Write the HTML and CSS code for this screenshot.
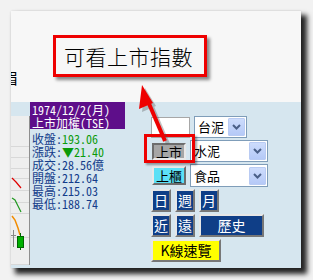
FILE: index.html
```html
<!DOCTYPE html>
<html lang="zh-Hant">
<head>
<meta charset="utf-8">
<title>上市指數</title>
<link rel="stylesheet" href="styles.css">
</head>
<body>
<div class="window">
  <div class="top">
    <span class="cut">眉</span>
  </div>
  <div class="panel">
    <div class="chart">
      <svg width="18" height="149" viewBox="0 0 18 149">
        <g stroke="#d8d8d8" stroke-width="1">
          <line x1="0" y1="30.5" x2="18" y2="30.5"/>
          <line x1="0" y1="41.5" x2="18" y2="41.5"/>
          <line x1="0" y1="52.5" x2="18" y2="52.5"/>
          <line x1="0" y1="62.5" x2="18" y2="62.5"/>
          <line x1="0" y1="74.5" x2="18" y2="74.5"/>
          <line x1="0" y1="86.5" x2="18" y2="86.5"/>
          <line x1="0" y1="97.5" x2="18" y2="97.5"/>
          <line x1="0" y1="121.5" x2="18" y2="121.5"/>
          <line x1="0" y1="148.5" x2="18" y2="148.5"/>
        </g>
        <polyline points="1,62 5,66 10,72" fill="none" stroke="#e00000" stroke-width="1.2"/>
        <polyline points="1,82 4,84 7,90 10,96" fill="none" stroke="#229922" stroke-width="1.2"/>
        <polyline points="1,100 4,104 7,112 9,119" fill="none" stroke="#f28c00" stroke-width="1.5"/>
        <line x1="2.5" y1="114" x2="2.5" y2="131" stroke="#888" stroke-width="1"/>
        <line x1="0" y1="119.5" x2="5" y2="119.5" stroke="#888" stroke-width="1"/>
        <line x1="9.5" y1="117" x2="9.5" y2="134" stroke="#006600" stroke-width="1"/>
        <rect x="6.5" y="120.5" width="6" height="11" fill="#00b000" stroke="#006600" stroke-width="1"/>
      </svg>
    </div>
    <div class="info">
      <div class="title">
        <div>1974/12/2(月)</div>
        <div>上市加權(TSE)</div>
      </div>
      <div class="row">收盤:<span class="val">193.06</span></div>
      <div class="row">漲跌:<span class="val">▼21.40</span></div>
      <div class="row">成交:28.56億</div>
      <div class="row">開盤:212.64</div>
      <div class="row">最高:215.03</div>
      <div class="row">最低:188.74</div>
    </div>
    <div class="controls">
      <div class="line">
        <div class="input"></div>
        <div class="select short"><span>台泥</span><i class="drop"><svg width="9" height="6" viewBox="0 0 9 6"><polyline points="1,1 4.5,4.5 8,1" fill="none" stroke="#4a5f87" stroke-width="2"/></svg></i></div>
      </div>
      <div class="line">
        <div class="btn gray">上市</div>
        <div class="select wide"><span>水泥</span><i class="drop"><svg width="9" height="6" viewBox="0 0 9 6"><polyline points="1,1 4.5,4.5 8,1" fill="none" stroke="#4a5f87" stroke-width="2"/></svg></i></div>
      </div>
      <div class="line">
        <div class="btn cyan">上櫃</div>
        <div class="select wide tall"><span>食品</span><i class="drop"><svg width="9" height="6" viewBox="0 0 9 6"><polyline points="1,1 4.5,4.5 8,1" fill="none" stroke="#4a5f87" stroke-width="2"/></svg></i></div>
      </div>
      <div class="line navrow">
        <div class="nav">日</div>
        <div class="nav">週</div>
        <div class="nav">月</div>
      </div>
      <div class="line navrow">
        <div class="nav">近</div>
        <div class="nav">遠</div>
        <div class="nav wide2">歷史</div>
      </div>
      <div class="line navrow">
        <div class="kbtn">K線速覽</div>
      </div>
    </div>
  </div>

  <div class="callout">可看上市指數</div>
  <div class="highlight"></div>
  <svg class="arrow" width="60" height="80" viewBox="0 0 60 80">
    <g transform="translate(3,3)" opacity="0.35">
      <line x1="14" y1="14" x2="32" y2="56" stroke="#555" stroke-width="4"/>
      <polygon points="9,0 6,24 20,18" fill="#555"/>
    </g>
    <line x1="14" y1="14" x2="32" y2="56" stroke="#ee0000" stroke-width="4"/>
    <polygon points="9,0 6,24 20,18" fill="#ee0000"/>
  </svg>
</div>
</body>
</html>
```

FILE: styles.css
```css
html, body {
  margin: 0;
  padding: 0;
}
body {
  width: 313px;
  height: 280px;
  overflow: hidden;
  background: #f2f2f2;
  font-family: "Noto Sans Mono CJK TC", "Noto Sans CJK TC", sans-serif;
}
.window {
  position: relative;
  margin: 11px 0 0 11px;
  width: 290px;
  height: 257px;
  background: #f7f7f7;
  box-shadow: 0 0 2px rgba(0,0,0,0.12), 5px 5px 5px 1px rgba(0,0,0,0.85);
  overflow: hidden;
}
.top {
  height: 91px;
  position: relative;
}
.cut {
  display: block;
  padding-top: 59px;
  margin-left: -8px;
  font-size: 15px;
  line-height: 16px;
  color: #000;
}
.panel {
  display: flex;
  align-items: flex-start;
  height: 166px;
  background: #d6e6ef;
}
.chart {
  width: 18px;
  height: 149px;
  margin-top: 14px;
  background: #eeeeee;
  border-right: 1px solid #8e8e8e;
}
.chart svg {
  display: block;
}
.info {
  width: 95px;
  color: #133c8a;
  font-size: 12px;
  line-height: 13px;
  white-space: nowrap;
}
.title {
  background: #5e0e8a;
  color: #fff;
  padding: 2px 0 0 2px;
  height: 25px;
  line-height: 12.5px;
}
.row {
  padding-left: 2px;
}
.title + .row {
  margin-top: 3px;
}
.val {
  color: #0a9a0a;
}
.controls {
  margin-left: 26px;
  padding-top: 14px;
  display: flex;
  flex-direction: column;
  gap: 2px;
}
.line {
  display: flex;
  align-items: center;
  gap: 4px;
}
.input {
  width: 37px;
  height: 19px;
  background: #fff;
  border: 1px solid #a7a7a7;
  margin-right: 0;
}
.select {
  height: 20px;
  background: #fff;
  border: 1px solid #7f9db9;
  display: flex;
  align-items: center;
  justify-content: space-between;
  font-family: "Noto Sans CJK TC", sans-serif;
  font-size: 13px;
  color: #000;
  box-sizing: content-box;
}
.select span {
  padding-left: 3px;
  line-height: 14px;
}
.select.short {
  width: 51px;
}
.select.wide {
  width: 76px;
  margin-left: 0;
}
.select.tall {
  height: 21px;
}
.drop {
  width: 15px;
  height: 16px;
  margin-right: 1px;
  background: linear-gradient(#cddcfc, #b5c9f7);
  border: 1px solid #b9cbf3;
  border-radius: 1px;
  display: flex;
  align-items: center;
  justify-content: center;
}
.drop svg {
  display: block;
}
.btn {
  width: 30px;
  font-family: "Noto Sans CJK TC", sans-serif;
  font-size: 13px;
  color: #000;
  text-align: center;
  border: 2px solid;
  box-sizing: content-box;
}
.btn.gray {
  height: 13px;
  line-height: 13px;
  background: #a6a6a6;
  border-color: #6d6d6d #e8e8e8 #e8e8e8 #6d6d6d;
  margin-left: 1px;
}
.btn.cyan {
  height: 15px;
  line-height: 15px;
  background: #5ce0f6;
  border-color: #e8e8e8 #6d6d6d #6d6d6d #e8e8e8;
  margin-left: 1px;
}
.navrow {
  gap: 4px;
}
.nav {
  width: 16px;
  height: 19px;
  line-height: 18px;
  text-align: center;
  background: #0f3e87;
  color: #fff;
  font-family: "Noto Sans CJK TC", sans-serif;
  font-size: 14px;
  border: 2px solid;
  border-color: #e6e6e6 #777 #777 #e6e6e6;
}
.nav.wide2 {
  width: 61px;
}
.kbtn {
  width: 66px;
  height: 19px;
  line-height: 18px;
  text-align: center;
  background: #ffff00;
  color: #000;
  font-family: "Noto Sans CJK TC", sans-serif;
  font-size: 14px;
  border: 2px solid;
  border-color: #e6e6e6 #777 #777 #e6e6e6;
}
.callout {
  position: absolute;
  left: 42px;
  top: 24px;
  width: 148px;
  height: 36px;
  border: 3px solid #ee0000;
  background: #f7f7f7;
  font-family: "Noto Sans CJK TC", sans-serif;
  font-weight: 300;
  font-size: 21px;
  line-height: 36px;
  padding-left: 8px;
  box-sizing: content-box;
  width: 140px;
  color: #000;
  box-shadow: 3px 3px 3px rgba(0,0,0,0.45);
  letter-spacing: 0.5px;
}
.highlight {
  position: absolute;
  left: 133px;
  top: 123px;
  width: 45px;
  height: 23px;
  border: 3px solid #ee0000;
  box-shadow: 2px 2px 2px rgba(0,0,0,0.35);
}
.arrow {
  position: absolute;
  left: 122px;
  top: 74px;
}
```
